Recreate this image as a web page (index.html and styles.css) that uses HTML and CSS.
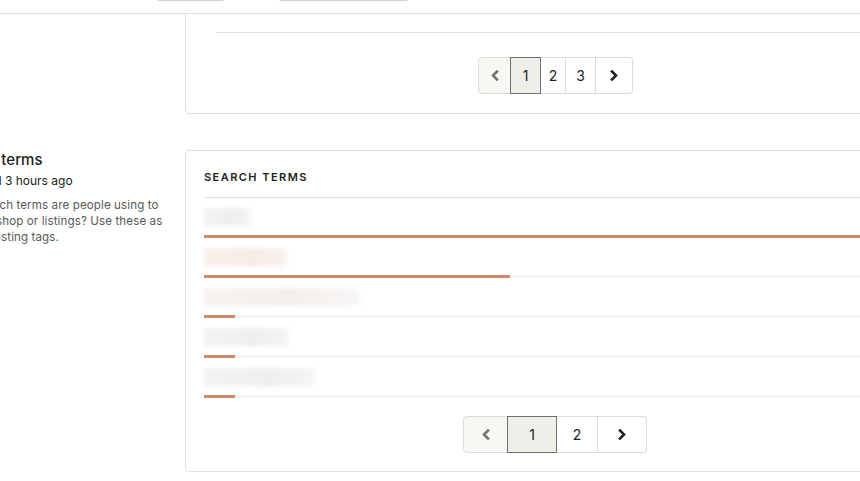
FILE: index.html
```html
<!DOCTYPE html>
<html lang="en">

<head>
    <meta charset="UTF-8" />
    <meta name="viewport" content="width=device-width, initial-scale=1.0" />
    <title>Shop Stats</title>
    <link rel="stylesheet" href="styles.css">
</head>

<body>
    <div class="filters">
        <div class="stub stub-short"></div>
        <div class="stub stub-long"></div>
    </div>

    <section class="layout first">
        <div class="side"></div>
        <div class="card card-open">
            <div class="table-end"></div>
            <nav class="pager">
                <button class="pg prev" aria-label="Previous">
                    <svg width="8" height="11" viewBox="0 0 8 11"><path d="M6 1.5 L2 5.5 L6 9.5" /></svg>
                </button>
                <button class="pg num active">1</button>
                <button class="pg num">2</button>
                <button class="pg num">3</button>
                <button class="pg next" aria-label="Next">
                    <svg width="8" height="11" viewBox="0 0 8 11"><path d="M2 1.5 L6 5.5 L2 9.5" /></svg>
                </button>
            </nav>
        </div>
    </section>

    <section class="layout second">
        <div class="side">
            <h2>Search terms</h2>
            <p class="updated">Updated 3 hours ago</p>
            <p class="desc">What search terms are people using to find your shop or listings? Use these as ideas for listing tags.</p>
        </div>
        <div class="card">
            <h3 class="card-title">SEARCH TERMS</h3>
            <ul class="terms">
                <li>
                    <span class="term grey" style="width: 46px"></span>
                    <div class="track"><div class="fill" style="width: 100%"></div></div>
                </li>
                <li>
                    <span class="term pink" style="width: 82px"></span>
                    <div class="track"><div class="fill" style="width: 43.6%"></div></div>
                </li>
                <li>
                    <span class="term mixed" style="width: 155px"></span>
                    <div class="track"><div class="fill" style="width: 4.4%"></div></div>
                </li>
                <li>
                    <span class="term grey" style="width: 85px"></span>
                    <div class="track"><div class="fill" style="width: 4.4%"></div></div>
                </li>
                <li>
                    <span class="term grey" style="width: 110px"></span>
                    <div class="track"><div class="fill" style="width: 4.4%"></div></div>
                </li>
            </ul>
            <nav class="pager pager-lg">
                <button class="pg prev" aria-label="Previous">
                    <svg width="8" height="11" viewBox="0 0 8 11"><path d="M6 1.5 L2 5.5 L6 9.5" /></svg>
                </button>
                <button class="pg num active">1</button>
                <button class="pg num">2</button>
                <button class="pg next" aria-label="Next">
                    <svg width="8" height="11" viewBox="0 0 8 11"><path d="M2 1.5 L6 5.5 L2 9.5" /></svg>
                </button>
            </nav>
        </div>
    </section>
</body>

</html>
```

FILE: styles.css
```css
body {
    margin: 0;
    font-family: Inter, "Noto Sans", Arial, sans-serif;
    color: #222;
    background: #fff;
    overflow: hidden;
}

.filters {
    display: flex;
    height: 13px;
    padding-left: 155px;
    gap: 51px;
}

.stub {
    height: 30px;
    margin-top: -29px;
    border: 1px solid #d0d0d0;
    border-radius: 4px;
    box-sizing: border-box;
}

.stub-short {
    width: 71px;
}

.stub-long {
    width: 133px;
}

.layout {
    display: grid;
    grid-template-columns: 215px 740px;
    column-gap: 23px;
    margin-left: -53px;
}

.first {
    border-top: 1px solid #e1e1e1;
}

.second {
    margin-top: 36px;
}

.card {
    border: 1px solid #e1e1e1;
    border-radius: 4px;
    padding: 18px 18px 18px;
}

.card-open {
    border-top: none;
    border-right: none;
    border-radius: 0 0 0 4px;
    padding: 0 0 19px;
}

.table-end {
    margin-left: 30px;
    height: 18px;
    border-bottom: 1px solid #e1e1e1;
    margin-bottom: 24px;
}

/* left column */
.side h2 {
    margin: 0;
    font-size: 15px;
    line-height: 20px;
    font-weight: 500;
}

.updated {
    margin: 3px 0 0;
    padding-left: 6px;
    font-size: 12px;
    line-height: 16px;
}

.desc {
    margin: 8px 0 0 -4px;
    font-size: 11.6px;
    line-height: 16px;
    letter-spacing: 0.1px;
    color: #595959;
    width: 222px;
}

/* search terms card */
.card-title {
    margin: 0;
    padding-bottom: 12px;
    border-bottom: 1px solid #e1e1e1;
    font-size: 11px;
    line-height: 16px;
    font-weight: 600;
    letter-spacing: 1.45px;
}

.terms {
    list-style: none;
    margin: 0;
    padding: 0;
}

.terms li {
    padding-top: 10px;
}

.term {
    display: block;
    height: 18px;
    margin-bottom: 9px;
    filter: blur(2px);
}

.term.grey {
    background: linear-gradient(90deg, #f4f3f3, #efeded 60%, #f5f4f4);
}

.term.pink {
    background: linear-gradient(90deg, #f9efeb, #f6ebe7 60%, #f9f0ed);
}

.term.mixed {
    background: linear-gradient(90deg, #f9f2ef, #f3eeec 55%, #f8f6f5);
}

.track {
    height: 3px;
    background: #f7f5f2;
}

.fill {
    height: 3px;
    background: #d18a6b;
}

/* pagination */
.pager {
    display: flex;
    justify-content: center;
}

.pager-lg {
    margin-top: 18px;
}

.pg {
    height: 37px;
    border: 1px solid #dcdcdc;
    border-left: none;
    background: #fff;
    font-family: inherit;
    font-size: 14px;
    color: #222;
    padding: 0;
    display: flex;
    align-items: center;
    justify-content: center;
    cursor: pointer;
}

.pg svg path {
    fill: none;
    stroke-width: 2.6;
    stroke-linecap: square;
}

.prev {
    border-left: 1px solid #dcdcdc;
    border-radius: 4px 0 0 4px;
    background: #f8f7f3;
    width: 33px;
}

.prev svg path {
    stroke: #757575;
}

.next {
    border-radius: 0 4px 4px 0;
    width: 37px;
}

.next svg path {
    stroke: #222;
}

.num {
    width: 25px;
}

.num.active {
    width: 31px;
    border: 1px solid #707070;
    background: #efefea;
    color: #222;
    margin-left: -1px;
}

.pager > .num:nth-child(4) {
    width: 30px;
}

.pager-lg .prev {
    width: 45px;
}

.pager-lg .num.active {
    width: 50px;
}

.pager-lg .num.active + .num {
    width: 41px;
}

.pager-lg .next {
    width: 49px;
}
```
